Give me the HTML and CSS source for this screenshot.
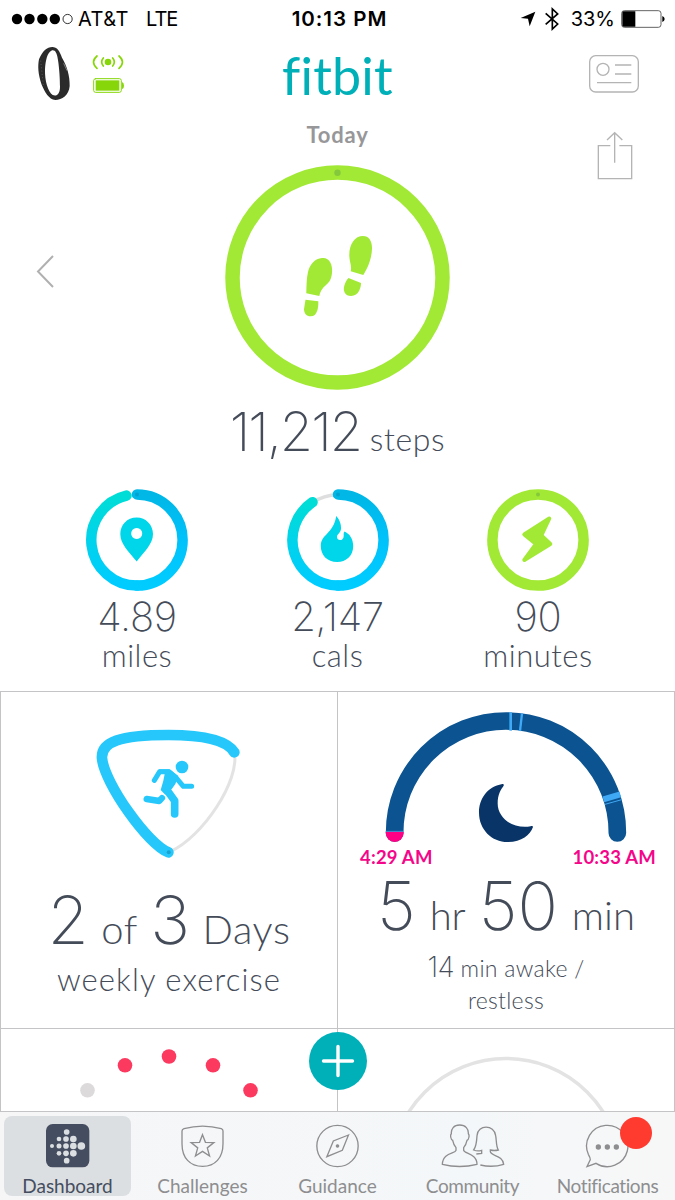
FILE: index.html
```html
<!DOCTYPE html>
<html lang="en">
<head>
  <meta charset="UTF-8" />
  <meta name="viewport" content="width=device-width, initial-scale=1.0" />
  <title>Fitbit - Dashboard</title>
  <link rel="stylesheet" href="styles.css">
</head>
<body>
  <div class="phone">
    <div class="status">
      <div class="carrier">
        <svg width="64" height="14" viewBox="0 0 64 14">
          <circle cx="6" cy="7" r="5.2" /><circle cx="18.5" cy="7" r="5.2" /><circle cx="31.3" cy="7" r="5.2" /><circle cx="43.8" cy="7" r="5.2" />
          <circle cx="56.6" cy="7" r="4.6" fill="none" stroke="#000" stroke-width=".8" />
        </svg>
        <span class="att">AT&amp;T</span>
        <span class="lte">LTE</span>
      </div>
      <div class="clock">10:13 PM</div>
      <div class="power">
        <svg class="arrow" width="16" height="16" viewBox="0 0 48 48"><path d="M46 2 L2 21 L24 23 L29 46 Z" /></svg>
        <svg class="bt" width="14" height="24" viewBox="0 0 42 72"><path d="M2 19 L38 51 L22 66 V6 L38 21 L2 52" fill="none" stroke="#000" stroke-width="5" /></svg>
        <span class="percent">33%</span>
        <svg width="44" height="18" viewBox="0 0 132 54">
          <rect x="2" y="2" width="118" height="50" rx="8" fill="none" stroke="#444" stroke-width="2.5" />
          <path d="M8 4 H43 V50 H8 Q4 50 4 46 V8 Q4 4 8 4Z" />
          <path d="M124 18 Q131 21 131 27 Q131 33 124 36Z" />
        </svg>
      </div>
    </div>

    <header class="header">
      <div class="device">
        <svg width="34" height="55" viewBox="0 0 102 165">
          <path fill="#2b2b2c" fill-rule="evenodd" d="M46 3 C60 3 68 15 75 35 C90 60 99 90 98 120 C96 148 75 162 55 162 C35 160 24 138 14 116 C3 84 2 60 6 40 C16 15 30 3 46 3Z M43 14 C31 20 26 42 24 70 C23 105 33 138 47 147 C60 152 69 143 69 122 C69 85 64 30 57 20 C54 13 48 12 43 14Z" />
          <path d="M80 52 L90 74" stroke="#aaa" stroke-width="2" />
          <path d="M11 44 L19 118" stroke="#555" stroke-width="3" stroke-dasharray="3 7" />
        </svg>
        <svg width="32" height="42" viewBox="0 0 96 126">
          <g fill="none" stroke="#87d60a" stroke-width="5" stroke-linecap="round">
            <path d="M34 12 Q24 24 34 36 M62 12 Q72 24 62 36 M15 6 Q-6 24 15 43 M81 6 Q102 24 81 43" />
            <rect x="5" y="74" width="83" height="41" rx="6" stroke-width="3" />
          </g>
          <g fill="#87d60a"><circle cx="48" cy="24" r="10" /><rect x="11" y="79" width="71" height="31" /><path d="M90 84 Q96 86 96 95 Q96 103 90 106Z" /></g>
        </svg>
      </div>
      <div class="logo">fitbit</div>
      <svg class="account" width="50" height="38" viewBox="0 0 150 114" fill="none" stroke="#b4b4b4" stroke-width="4">
        <rect x="2" y="2" width="146" height="109" rx="18" />
        <circle cx="42" cy="43" r="18" />
        <path d="M78 30 H127 M78 57 H127 M24 83 H127" />
      </svg>
    </header>

    <section class="today">
      <svg class="back" width="18" height="33" viewBox="0 0 18 33"><path d="M17 1 L2 16.500 L17 32" fill="none" stroke="#b0b0b0" stroke-width="2" /></svg>
      <div class="day">
        <h1>Today</h1>
        <svg width="225" height="225" viewBox="0 0 225 225">
          <circle cx="112.500" cy="112.500" r="105" fill="none" stroke="#a2e935" stroke-width="14.500" />
          <circle cx="112.500" cy="7.700" r="3.200" fill="#84c93c" />
          <g fill="#a2e935">
            <path d="M97 93 C104 92 108 99 107 108 C106.500 113 105 117 101 120 C97 123 95 127 94.300 131 L81.300 128.300 C81.500 120 81.500 114 83 107 C85 99 90 93.500 97 93Z" />
            <path d="M80.500 134.700 L93.300 136.300 C93.500 140 93 143 92.300 145.500 C91 149.500 89 151.300 85.700 151.300 C81 151.300 79 148 79 144Z" />
            <path d="M138 71 C144 71 147.300 76 147 84 C146.500 95 142 104 138.300 110 L125.700 106.300 C127 101 124.500 97 124.300 91 C124 79 130 71 138 71Z" />
            <path d="M123.500 113 L136 118 C136 122 134 131 126 131 C120 131 117.500 126 119.500 120 C120.500 117 121.500 115 123.500 113Z" />
          </g>
        </svg>
      </div>
      <svg class="share" width="36" height="49" viewBox="0 0 108 147" fill="none" stroke="#b4b4b4" stroke-width="4">
        <path d="M40 44 H4 V143 H104 V44 H67 M53 95 V5 M30 27 L53 5 L76 27" />
      </svg>
    </section>
    <div class="steps"><b>11,212</b> <span>steps</span></div>

    <section class="stats">
      <div class="stat">
        <svg width="102" height="102" viewBox="0 0 102 102">
          <defs>
            <linearGradient id="start" x1="0" y1="0" x2="0" y2="1"><stop offset="0" stop-color="#00b7e6" /><stop offset=".5" stop-color="#00c2fb" /><stop offset="1" stop-color="#00ccff" /></linearGradient>
            <linearGradient id="end" x1="0" y1="1" x2="0" y2="0"><stop offset="0" stop-color="#00ccff" /><stop offset=".5" stop-color="#00d3ec" /><stop offset="1" stop-color="#00ddd6" /></linearGradient>
          </defs>
          <g fill="none" stroke-width="10.500" stroke-linecap="round">
            <path d="M51 96.600 A45.600 45.600 0 0 1 40.500 6.600" stroke="url(#end)" />
            <path d="M51 5.400 A45.600 45.600 0 0 1 51 96.600" stroke="url(#start)" />
          </g>
          <circle cx="51" cy="5.400" r="2" fill="#00a2cf" />
          <path fill="#00d6e9" fill-rule="evenodd" d="M50.700 28.500 C60 28.500 67 36 67 45 C67 55 58 63 50.700 72.500 C43 63 34.300 55 34.300 45 C34.300 36 41 28.500 50.700 28.500Z M50.700 39 a5.500 5.500 0 1 0 .01 0Z" />
        </svg>
        <b>4.89</b>
        <span>miles</span>
      </div>
      <div class="stat">
        <svg width="102" height="102" viewBox="0 0 102 102">
          <path d="M25 13.500 Q37 6 51 5.400" fill="none" stroke="#dedede" stroke-width="3.500" />
          <g fill="none" stroke-width="10.500" stroke-linecap="round">
            <path d="M51 96.600 A45.600 45.600 0 0 1 25.500 13.200" stroke="url(#end)" />
            <path d="M51 5.400 A45.600 45.600 0 0 1 51 96.600" stroke="url(#start)" />
          </g>
          <circle cx="51" cy="5.400" r="2" fill="#00a2cf" />
          <path fill="#00d6e9" d="M49.200 27 C52 30 54.500 35 54 40 C53.600 44 50 45 50 48 C50 52 55.500 52 56.500 48.500 C57.200 46 56 44 57.500 42.500 C62.500 44.500 66.200 50 66.200 57 C66.200 67 59 73 50.200 73 C40 73 33.800 66 33.800 57 C33.800 45 46.500 45 49.200 27Z" />
        </svg>
        <b>2,147</b>
        <span>cals</span>
      </div>
      <div class="stat">
        <svg width="102" height="102" viewBox="0 0 102 102">
          <circle cx="51" cy="51" r="45.600" fill="none" stroke="#a2e935" stroke-width="10.500" />
          <circle cx="51" cy="5.400" r="2" fill="#84c93c" />
          <path d="M62.300 29.500 L54.300 46.500 L63.300 55 L37.300 71 L49 55 L37.300 45.500 Z" fill="#a2e935" stroke="#a2e935" stroke-width="4" stroke-linejoin="round" />
        </svg>
        <b>90</b>
        <span>minutes</span>
      </div>
    </section>

    <section class="tiles">
      <div class="tile exercise">
        <svg width="200" height="160" viewBox="0 0 600 480">
          <g fill="none" stroke-linecap="round">
            <path d="M493 127 C510 210 400 380 300 425" stroke="#e3e3e3" stroke-width="9" />
            <path d="M295 427 C235 405 103 220 96 145 C92 95 150 75 295 75 C420 75 475 98 493 127" stroke="#26c8fb" stroke-width="32" />
          </g>
          <circle cx="296" cy="427" r="6" fill="#1aa3cf" />
          <circle cx="336" cy="171" r="19" fill="#26c8fb" />
          <path d="M265 178 H298 L325 198 L316 222 L306 236 L286 254 L272 240 L280 212 L284 192Z" fill="#26c8fb" />
          <g fill="none" stroke="#26c8fb" stroke-linecap="round" stroke-linejoin="round">
            <path d="M253 211 L269 185 H297 L318 203 L340 229 H365" stroke-width="15" />
            <path d="M288 236 L314 272 V312" stroke-width="23" />
            <path d="M230 267 L268 273 L276 264" stroke-width="19" />
          </g>
        </svg>
        <div class="big"><b>2</b> <span>of</span> <b>3</b> <span>Days</span></div>
        <div class="sub">weekly exercise</div>
      </div>

      <div class="tile sleep">
        <svg width="335" height="150" viewBox="0 30 1005 450">
          <path d="M164 429 V427 A334 334 0 0 1 832 427 V429" fill="none" stroke="#0b5391" stroke-width="53" stroke-linecap="round" />
          <path d="M137 425 H191 V429 A27 27 0 0 1 137 429Z" fill="#ff0084" />
          <path d="M137 424 H191" stroke="#4eb8f7" stroke-width="2" />
          <g stroke="#3fa9f5">
            <path d="M512 67 V122" stroke-width="8" />
            <path d="M546 70 L540 123" stroke-width="7" />
            <path d="M790 328 L841 313" stroke-width="18" />
            <path d="M795 343 L845 329" stroke-width="3" />
          </g>
          <path d="M487 282 C440 291 417 328 417 368 C417 418 455 456 503 456 C545 456 570 435 579 411 C578 407 575 408 572 409 C520 418 473 386 473 340 C473 312 483 298 491 287 C492 283 490 281 487 282Z" fill="#083468" />
        </svg>
        <div class="times"><span>4:29 AM</span><span>10:33 AM</span></div>
        <div class="big"><b>5</b> <span>hr</span> <b>50</b> <span>min</span></div>
        <div class="awake"><b>14</b> min awake /<br>restless</div>
      </div>

      <div class="tile">
        <svg width="336" height="82" viewBox="1 1029 336 82">
          <circle cx="87.500" cy="1090.300" r="7.300" fill="#dcdadb" />
          <g fill="#fc3a60"><circle cx="125" cy="1065.300" r="7.300" /><circle cx="169" cy="1056.500" r="7.300" /><circle cx="213" cy="1065.300" r="7.300" /><circle cx="250.500" cy="1090.300" r="7.300" /></g>
        </svg>
      </div>
      <div class="tile">
        <svg width="336" height="82" viewBox="338 1029 336 82"><circle cx="506" cy="1173.500" r="115" fill="none" stroke="#e3e3e3" stroke-width="3.500" /></svg>
      </div>
      <button class="add" aria-label="Add"><svg width="58" height="58" viewBox="0 0 58 58"><path d="M29 14.500 V43.500 M14.500 29 H43.500" stroke="#fff" stroke-width="3.400" stroke-linecap="round" /></svg></button>
    </section>

    <nav class="tabs">
      <a class="tab active">
        <svg width="45" height="45" viewBox="0 0 135 135">
          <rect x="3" y="3" width="130" height="130" rx="20" fill="#454e60" />
          <g fill="#dcdfe2">
            <circle cx="65" cy="27" r="8.500" />
            <circle cx="42" cy="48" r="7" /><circle cx="63" cy="48" r="8.500" /><circle cx="85" cy="48" r="10" />
            <circle cx="21" cy="69" r="6" /><circle cx="42" cy="69" r="7.500" /><circle cx="63" cy="69" r="8.500" /><circle cx="85" cy="69" r="10" /><circle cx="109" cy="69" r="11.500" />
            <circle cx="42" cy="91" r="7" /><circle cx="63" cy="91" r="8.500" /><circle cx="85" cy="91" r="10" />
            <circle cx="65" cy="113" r="8.500" />
          </g>
        </svg>
        <span>Dashboard</span>
      </a>
      <a class="tab">
        <svg width="45" height="45" viewBox="0 0 135 135">
          <path d="M12 17 C48 7 88 7 124 17 Q129 19 129 24 V62 C129 105 105 130 68 130 C30 130 6 105 6 62 V24 Q6 19 12 17Z" />
          <path d="M67.500 35 L76.300 57.900 L101.700 58.900 L81.800 74.600 L88.700 99.100 L67.500 85 L46.300 99.100 L53.200 74.600 L33.300 58.900 L58.700 57.900Z" />
        </svg>
        <span>Challenges</span>
      </a>
      <a class="tab">
        <svg width="45" height="45" viewBox="0 0 135 135">
          <circle cx="67.500" cy="69" r="62" />
          <path d="M100.500 36 L55 54 L35.500 101 L82 82Z" /><circle cx="67.500" cy="69" r="3.500" fill="#8e8e90" />
        </svg>
        <span>Guidance</span>
      </a>
      <a class="tab">
        <svg width="64" height="45" viewBox="0 0 192 135">
          <path d="M56 6 C38 6 30 18 31 32 C27 36 29 50 35 52 C37 62 40 68 45 74 V82 C43 92 5 88 4 124 C40 133 80 131 108 124 C108 92 70 92 68 82 V74 C73 68 76 62 78 52 C84 50 86 36 82 32 C83 18 74 6 56 6Z" />
          <path d="M118 126 C140 131 165 131 188 124 C186 96 150 100 148 86 V81 C156 83 164 83 172 81 C165 70 167 55 164 38 C160 4 110 4 108 38 C107 58 106 70 98 81 C105 84 113 85 122 82 V91 L106 93" />
        </svg>
        <span class="tight">Community</span>
      </a>
      <a class="tab">
        <svg width="45" height="45" viewBox="0 0 135 135">
          <path d="M33 121 A62 62 0 1 0 10 94 Q18 108 15 112 L6 131Z" />
          <g fill="#8e8e90" stroke="none"><circle cx="40" cy="72" r="8" /><circle cx="67" cy="72" r="8" /><circle cx="94" cy="72" r="8" /></g>
        </svg>
        <i class="badge"></i>
        <span class="tight">Notifications</span>
      </a>
    </nav>
  </div>
</body>
</html>
```

FILE: styles.css
```css
body {
  margin: 0;
  background: #fff;
}
.phone {
  width: 675px;
  height: 1200px;
  overflow: hidden;
  display: flex;
  flex-direction: column;
  background: #fff;
  color: #454c59;
  font-family: Lato, "Open Sans", sans-serif;
  font-weight: 300;
}
svg {
  display: block;
  flex: none;
}
b {
  font-family: Inter, Roboto, sans-serif;
  font-weight: 200;
}

/* status bar */
.status {
  display: grid;
  grid-template-columns: 240px 1fr 240px;
  height: 38px;
  line-height: 38px;
  font-family: Inter, Roboto, sans-serif;
  font-size: 20px;
  font-weight: 400;
  color: #000;
}
.carrier, .power {
  display: flex;
  align-items: center;
}
.carrier {
  padding-left: 11px;
}
.carrier .att {
  margin-left: 3px;
  width: 68px;
  letter-spacing: .5px;
}
.lte {
  letter-spacing: -1px;
}
.clock {
  text-align: center;
  font-size: 20.500px;
  font-weight: 600;
  letter-spacing: 1px;
  padding-left: 4px;
}
.power {
  justify-content: flex-end;
  padding-right: 10px;
}
.bt {
  margin: 0 12px 0 9px;
}
.percent {
  margin-right: 6px;
}

/* header */
.header {
  display: grid;
  grid-template-columns: 225px 225px 225px;
  height: 82px;
}
.device {
  display: flex;
  align-items: flex-start;
  gap: 21px;
  padding: 8px 0 0 37px;
}
.device svg + svg {
  margin-top: 8px;
}
.logo {
  text-align: center;
  color: #00b0b9;
  font-family: Lato, sans-serif;
  font-size: 52px;
  font-weight: 400;
  line-height: 75px;
  letter-spacing: .2px;
  font-variant-ligatures: none;
}
.account {
  margin: 17px 0 0 139px;
}

/* steps */
.today {
  display: grid;
  grid-template-columns: 225px 225px 225px;
  height: 270px;
}
.back {
  margin: 135px 0 0 36px;
}
.share {
  margin: 11px 0 0 147px;
}
.day h1 {
  margin: 0;
  height: 45px;
  line-height: 30px;
  text-align: center;
  font-size: 22px;
  font-weight: 700;
  letter-spacing: .8px;
  color: #97979a;
}
.steps {
  margin-top: 12px;
  height: 60px;
  line-height: 60px;
  text-align: center;
  white-space: nowrap;
  font-size: 32px;
}
.steps b {
  font-size: 54px;
  letter-spacing: -2px;
}
.steps span {
  letter-spacing: .6px;
}

/* small rings */
.stats {
  display: flex;
  justify-content: space-between;
  margin-top: 27px;
  padding: 0 37px;
  height: 202px;
}
.stat {
  width: 200px;
  display: flex;
  flex-direction: column;
  align-items: center;
}
.stat b {
  margin-top: 6px;
  font-size: 40px;
  line-height: 40px;
  letter-spacing: -.3px;
}
.stat span {
  font-size: 31px;
  line-height: 36px;
  letter-spacing: .5px;
}

/* tiles */
.tiles {
  position: relative;
  display: grid;
  grid-template-columns: 336px 336px;
  grid-template-rows: 336px 82px;
  gap: 1px;
  padding: 1px;
  background: #c4c4c6;
}
.tile {
  background: #fff;
  overflow: hidden;
}
.exercise svg {
  margin: 18px 0 0 69px;
}
.exercise, .sleep {
  text-align: center;
  white-space: nowrap;
}
.big {
  height: 70px;
  line-height: 70px;
  font-size: 40px;
  word-spacing: 3px;
}
.big b {
  font-size: 67px;
}
.exercise .big {
  margin-top: 15px;
  word-spacing: 1.500px;
}
.exercise .big span {
  letter-spacing: .6px;
}
.sub {
  margin-top: 6px;
  font-size: 31px;
  line-height: 36px;
  letter-spacing: 1.100px;
}
.sleep svg {
  margin: 8px 0 0 2px;
}
.times {
  display: flex;
  justify-content: space-between;
  padding: 0 18px 0 22px;
  margin-top: -5px;
  height: 24px;
  line-height: 24px;
  font-size: 18.500px;
  font-weight: 700;
  letter-spacing: .2px;
  color: #f5058a;
}
.sleep .big {
  margin-top: 2px;
}
.awake {
  margin-top: 10px;
  font-size: 23px;
  line-height: 32px;
  letter-spacing: .3px;
}
.awake b {
  font-size: 28px;
  letter-spacing: -.6px;
}
.add {
  position: absolute;
  left: 309px;
  top: 341px;
  width: 58px;
  height: 58px;
  padding: 0;
  border: none;
  border-radius: 50%;
  background: #00b0b9;
}

/* bottom tabs */
.tabs {
  display: grid;
  grid-template-columns: repeat(5, 135px);
  height: 88px;
  background: linear-gradient(90deg, #f6f6f7, #f4f7f9 70%, #f7f7f7);
}
.tab {
  position: relative;
  display: flex;
  flex-direction: column;
  align-items: center;
  box-sizing: border-box;
  margin: 4px;
  padding-top: 7px;
  border-radius: 8px;
  color: #8e8e90;
  font-size: 19px;
  line-height: 21px;
  font-weight: 400;
}
.tab span {
  margin-top: 7px;
}
.tab svg {
  fill: none;
  stroke: #8e8e90;
  stroke-width: 4;
}
.tab.active {
  background: #dcdfe1;
  color: #454e60;
}
.tab.active svg {
  stroke: none;
}
.tab .tight {
  letter-spacing: -.4px;
}
.badge {
  position: absolute;
  left: 76px;
  top: 1px;
  width: 32px;
  height: 32px;
  border-radius: 50%;
  background: #ff3b30;
}
```
